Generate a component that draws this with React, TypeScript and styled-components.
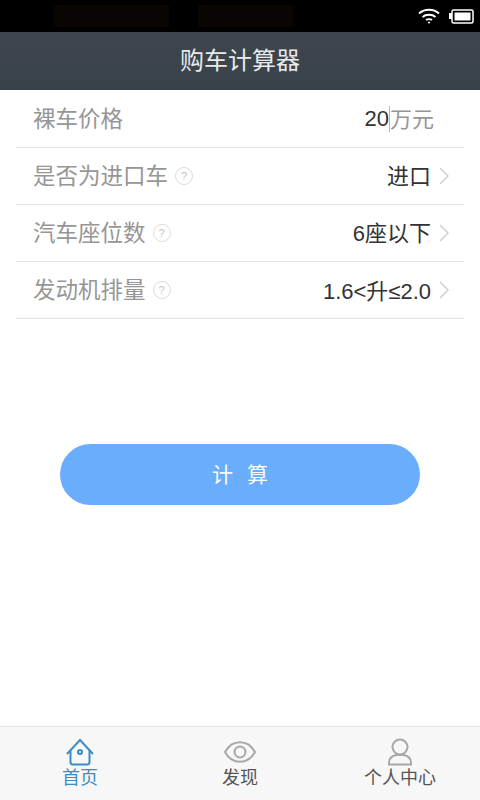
import * as React from "react";
import styled, { createGlobalStyle } from "styled-components";

const GlobalStyle = createGlobalStyle`
  html, body {
    margin: 0;
    padding: 0;
    background: #fff;
  }
  * {
    box-sizing: border-box;
  }
`;

const fontStack = `"Liberation Sans", "Noto Sans CJK SC", sans-serif`;

const Page = styled.div`
  display: flex;
  flex-direction: column;
  width: 480px;
  height: 800px;
  overflow: hidden;
  font-family: ${fontStack};
  background: #fff;
`;

const StatusBar = styled.div`
  display: flex;
  align-items: center;
  justify-content: space-between;
  flex: 0 0 32px;
  padding: 0 6px 0 53px;
  background: #000;
`;

const BlurGroup = styled.div`
  display: flex;
  gap: 29px;
`;

const BlurredNote = styled.div<{ $width: number }>`
  width: ${(props) => props.$width}px;
  height: 22px;
  background: #0a0402;
`;

const StatusIcons = styled.div`
  display: flex;
  align-items: center;
  gap: 9px;
`;

const TitleBar = styled.div`
  display: flex;
  align-items: center;
  justify-content: center;
  flex: 0 0 58px;
  padding-bottom: 5px;
  background: linear-gradient(#3f464d, #39424a);
  color: #e8eaeb;
  font-size: 24px;
`;

const Form = styled.div`
  display: flex;
  flex-direction: column;
  padding: 1px 16px 0;
`;

const Row = styled.div`
  display: flex;
  align-items: center;
  justify-content: space-between;
  height: 57px;
  padding: 0 16px 0 17px;
  border-bottom: 1px solid #e3e3e3;
`;

const Label = styled.div`
  display: flex;
  align-items: center;
  gap: 7px;
  font-size: 22.5px;
  color: #969696;
`;

// the CJK fallback sits low in the line box, this lifts it to the row centre
const Lifted = styled.span<{ $lift: number }>`
  padding-bottom: ${(props) => props.$lift}px;
`;

const Hint = styled.span`
  display: flex;
  align-items: center;
  justify-content: center;
  width: 18px;
  height: 18px;
  border: 1px solid #dcdcdc;
  border-radius: 50%;
  font-size: 11px;
  color: #c4c4c4;
`;

const Value = styled.div`
  display: flex;
  align-items: center;
  font-size: 22px;
  color: #333;
`;

const Caret = styled.span`
  width: 1px;
  height: 26px;
  background: #b5b5b5;
`;

const Unit = styled.span`
  margin-right: 14px;
  padding-bottom: 5px;
  color: #969696;
`;

const Chevron = styled.svg`
  margin-left: 8px;
  margin-right: -1px;
`;

const ButtonWrap = styled.div`
  display: flex;
  justify-content: center;
  padding-top: 125px;
`;

const CalcButton = styled.button`
  width: 360px;
  height: 61px;
  padding: 0 0 4px;
  border: 0;
  border-radius: 31px;
  background: #6aadfd;
  color: #fafcff;
  font-family: ${fontStack};
  font-size: 21px;
  word-spacing: 8px;
`;

const TabBar = styled.div`
  display: grid;
  grid-template-columns: repeat(3, 1fr);
  margin-top: auto;
  height: 74px;
  background: #f7f7f7;
  border-top: 1px solid #e6e6e6;
`;

const Tab = styled.div<{ $active?: boolean }>`
  display: flex;
  flex-direction: column;
  align-items: center;
  padding-top: 11px;
  font-size: 18px;
  line-height: 22px;
  color: ${(props) => (props.$active ? "#3a8cc8" : "#555")};
`;

const TabIcon = styled.svg`
  display: block;
  height: 28px;
  margin-bottom: 1px;
`;

const ChevronIcon = () => (
  <Chevron width="10" height="18" viewBox="0 0 10 18" fill="none" stroke="#cfcfcf" strokeWidth="1.5">
    <path d="M1 1l8 8-8 8" />
  </Chevron>
);

const rows = [
  { label: "是否为进口车", value: "进口", lift: 4 },
  { label: "汽车座位数", value: "6座以下", lift: 4 },
  { label: "发动机排量", value: "1.6<升≤2.0", lift: 3 },
];

export default function App() {
  return (
    <Page>
      <GlobalStyle />
      <StatusBar>
        <BlurGroup>
          <BlurredNote $width={116} />
          <BlurredNote $width={95} />
        </BlurGroup>
        <StatusIcons>
          <svg width="22" height="16" viewBox="0 0 22 16" fill="none" stroke="#fff" strokeWidth="2">
            <path d="M1 5.500c5.500-5 14.500-5 20 0" />
            <path d="M4.500 9c3.500-3 9.500-3 13 0" />
            <path d="M8 12c1.500-1 4.500-1 6 0" />
            <circle cx="11" cy="14.500" r="1" fill="#fff" stroke="none" />
          </svg>
          <svg width="25" height="16" viewBox="0 0 25 16">
            <rect x="0" y="5" width="3" height="6" fill="#fff" />
            <rect x="3" y="2" width="21" height="13" rx="1.500" fill="none" stroke="#fff" strokeWidth="1.500" />
            <rect x="5.500" y="4.500" width="16" height="8" fill="#fff" />
          </svg>
        </StatusIcons>
      </StatusBar>
      <TitleBar>购车计算器</TitleBar>
      <Form>
        <Row>
          <Label>
            <Lifted $lift={5}>裸车价格</Lifted>
          </Label>
          <Value>
            20
            <Caret />
            <Unit>万元</Unit>
          </Value>
        </Row>
        {rows.map((row) => (
          <Row key={row.label}>
            <Label>
              <Lifted $lift={4}>{row.label}</Lifted>
              <Hint>?</Hint>
            </Label>
            <Value>
              <Lifted $lift={row.lift}>{row.value}</Lifted>
              <ChevronIcon />
            </Value>
          </Row>
        ))}
      </Form>
      <ButtonWrap>
        <CalcButton>计 算</CalcButton>
      </ButtonWrap>
      <TabBar>
        <Tab $active>
          <TabIcon width="30" viewBox="0 0 30 28" fill="none" stroke="#3a8cc8" strokeWidth="2">
            <path d="M2 16L15 2l13 14" />
            <path d="M5.500 12.500V24a2.500 2.500 0 0 0 2.500 2.500h14a2.500 2.500 0 0 0 2.500-2.500V12.500" />
            <circle cx="15" cy="14" r="2" />
          </TabIcon>
          首页
        </Tab>
        <Tab>
          <TabIcon width="32" viewBox="0 0 32 28" fill="none" stroke="#a8a8a8" strokeWidth="2">
            <path d="M1 14c7-13 23-13 30 0-7 13-23 13-30 0z" />
            <circle cx="16" cy="14" r="5.500" />
          </TabIcon>
          发现
        </Tab>
        <Tab>
          <TabIcon width="26" viewBox="0 0 26 28" fill="none" stroke="#a8a8a8" strokeWidth="2">
            <circle cx="13" cy="9" r="7.500" />
            <path d="M2 26.500v-2c0-4 3-6.500 7-7.500h8c4 1 7 3.500 7 7.500v2z" />
          </TabIcon>
          个人中心
        </Tab>
      </TabBar>
    </Page>
  );
}
